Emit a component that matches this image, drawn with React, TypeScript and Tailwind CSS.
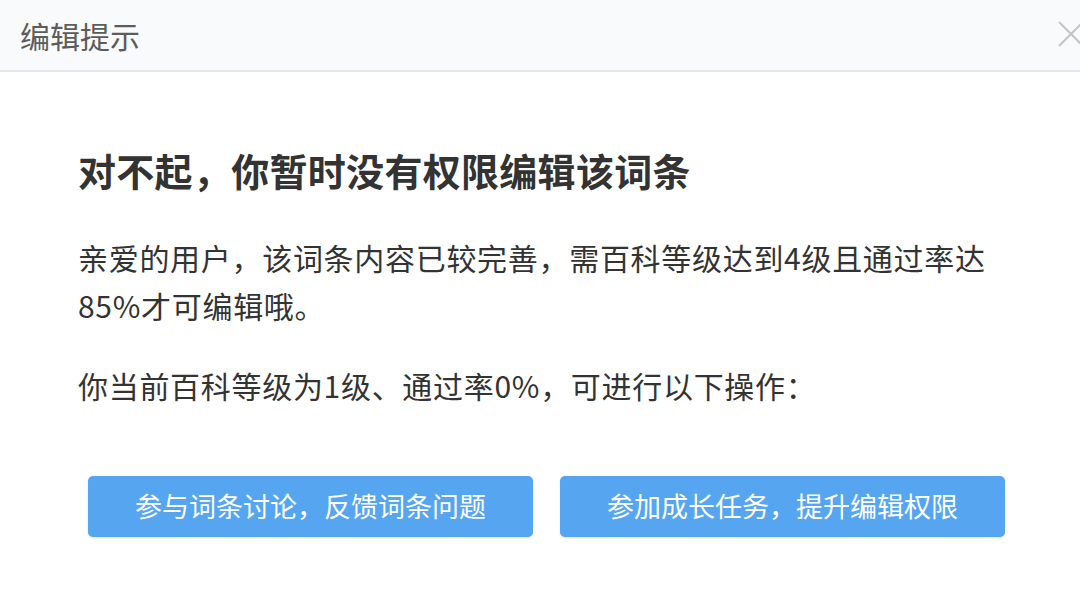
export default function App() {
  return (
    <div
      className="w-[1080px] h-[595px] overflow-hidden bg-white"
      style={{ fontFamily: '"Noto Sans CJK SC", "Noto Sans", sans-serif' }}
    >
      {/* 标题栏 */}
      <div className="h-[72px] flex items-center justify-between pl-[20px] bg-[#f9fafc] border-b-2 border-[#e6e6e6]">
        <span className="text-[30px] leading-[40px] text-[#5c5c5c]">编辑提示</span>
        <svg width="26" height="26" viewBox="0 0 26 26" className="mr-[-4px] mb-[2px]">
          <path d="M1 1L25 25M25 1L1 25" stroke="#c4c4c4" strokeWidth="2" fill="none" />
        </svg>
      </div>

      {/* 内容 */}
      <div className="pt-[74px] pl-[78px] pr-[70px]">
        <h2 className="text-[38px] leading-[48px] font-bold text-[#333] tracking-[0.3px]">
          对不起，你暂时没有权限编辑该词条
        </h2>
        <p className="mt-[39px] text-[30px] leading-[48px] text-[#333] tracking-[0.7px]">
          亲爱的用户，该词条内容已较完善，需百科等级达到4级且通过率达85%才可编辑哦。
        </p>
        <p className="mt-[32px] text-[30px] leading-[48px] text-[#333] tracking-[0.7px]">
          你当前百科等级为1级、通过率0%，可进行以下操作：
        </p>

        <div className="mt-[67px] ml-[10px] flex gap-[27px]">
          <button className="w-[445px] h-[61px] rounded-[5px] bg-[#55a5f1] text-white text-[27px] shadow-[0_1px_2px_rgba(0,0,0,0.12)]">
            参与词条讨论，反馈词条问题
          </button>
          <button className="w-[445px] h-[61px] rounded-[5px] bg-[#55a5f1] text-white text-[27px] shadow-[0_1px_2px_rgba(0,0,0,0.12)]">
            参加成长任务，提升编辑权限
          </button>
        </div>
      </div>
    </div>
  );
}
